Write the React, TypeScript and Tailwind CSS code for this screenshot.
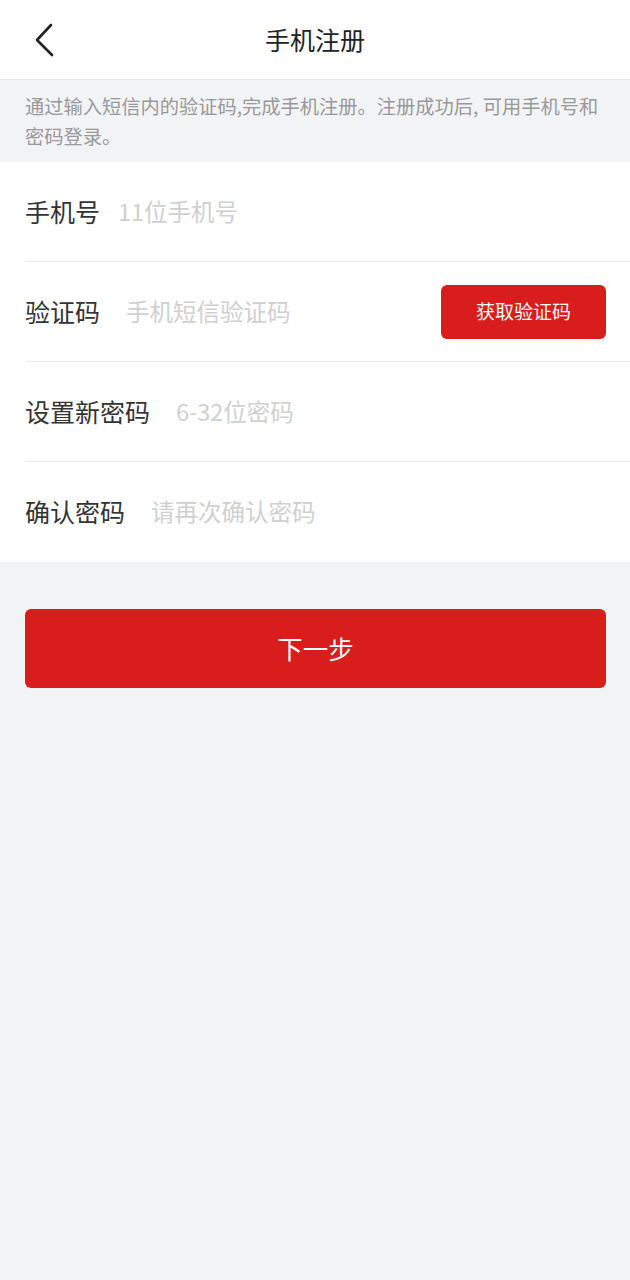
import React from 'react';

const font = { fontFamily: '"Noto Sans CJK SC", "Noto Sans", sans-serif' };

function Row({ label, placeholder, last, action, gap = 'ml-[26px]' }: { label: string; placeholder: string; last?: boolean; action?: React.ReactNode; gap?: string }) {
  return (
    <div className={`ml-[25px] h-[100px] flex items-center pr-6 ${last ? '' : 'border-b border-[#ebebeb]'}`}>
      <span className="text-[25px] text-[#333333] shrink-0">{label}</span>
      <input
        className={`${gap} flex-1 min-w-0 bg-transparent outline-none text-[23.5px] text-[#333333] placeholder:text-[#d0d0d0]`}
        placeholder={placeholder}
      />
      {action}
    </div>
  );
}

export default function App() {
  return (
    <div className="w-[630px] min-h-[1280px] bg-[#f2f3f5]" style={font}>
      {/* header */}
      <div className="relative h-[80px] bg-white border-b border-[#e6e6e6] flex items-center justify-center">
        <button className="absolute left-[30px] top-[20px] w-[30px] h-[40px] flex items-center justify-center">
          <svg width="30" height="40" viewBox="0 0 30 40" fill="none">
            <polyline points="21,5 7,20 22,35" stroke="#222" strokeWidth="2.6" strokeLinecap="round" strokeLinejoin="round" />
          </svg>
        </button>
        <h1 className="text-[25px] text-[#222222]">手机注册</h1>
      </div>

      {/* tip */}
      <div className="pl-[25px] pr-[20px] pt-[11px] pb-[11px] text-[19.25px] leading-[30px] text-[#999999]">
        通过输入短信内的验证码,完成手机注册。注册成功后, 可用手机号和密码登录。
      </div>

      {/* form */}
      <div className="bg-white">
        <Row label="手机号" placeholder="11位手机号" gap="ml-[18px]" />
        <Row
          label="验证码"
          placeholder="手机短信验证码"
          action={
            <button className="shrink-0 w-[165px] h-[54px] rounded-[6px] bg-[#d91c1c] text-white text-[19px]">
              获取验证码
            </button>
          }
        />
        <Row label="设置新密码" placeholder="6-32位密码" />
        <Row label="确认密码" placeholder="请再次确认密码" last />
      </div>

      <div className="px-[25px] pt-[47px]">
        <button className="w-[581px] h-[79px] rounded-[6px] bg-[#d91c1c] text-white text-[25.5px]">下一步</button>
      </div>
    </div>
  );
}
